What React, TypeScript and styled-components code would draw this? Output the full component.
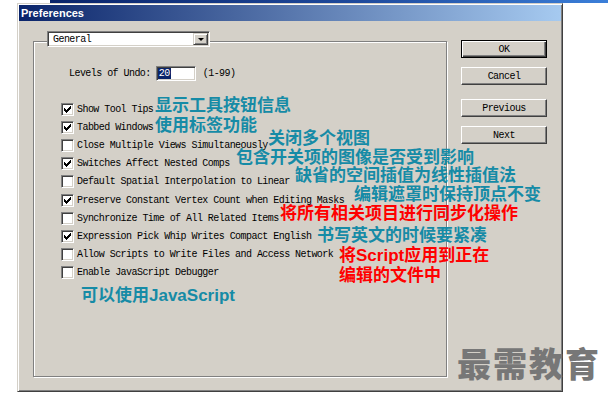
import React from "react";
import styled, { createGlobalStyle } from "styled-components";

const Global = createGlobalStyle`
  html, body { margin: 0; padding: 0; background: #fff; }
  body { overflow: hidden; }
`;

const Page = styled.div`
  position: relative;
  width: 608px;
  height: 405px;
  overflow: hidden;
  background: #fff;
  font-family: "Liberation Mono", monospace;
`;

const Strip = styled.div`
  height: 3px;
  margin-left: 50px;
  background: linear-gradient(90deg, #0a246a 0%, #1f4a9c 55%, #3b7fd9 100%);
`;

const Dialog = styled.div`
  box-sizing: border-box;
  margin-left: 17px;
  width: 546px;
  height: 389px;
  padding: 1px;
  background: #d4d0c8;
  border: 1px solid;
  border-color: #d4d0c8 #404040 #404040 #d4d0c8;
  box-shadow: inset 1px 1px 0 #fff, inset -1px -1px 0 #808080;
  display: flex;
  flex-direction: column;
`;

const TitleBar = styled.div`
  height: 16px;
  padding-left: 2px;
  display: flex;
  align-items: center;
  background: linear-gradient(90deg, #0a246a 0%, #a6caf0 100%);
  color: #fff;
  font: bold 11px "Liberation Sans", Arial, sans-serif;
`;

const Body = styled.div`
  flex: 1;
  display: flex;
  align-items: flex-start;
  padding: 19px 13px 0 14px;
`;

const Group = styled.div`
  box-sizing: border-box;
  width: 414px;
  height: 336px;
  margin-top: 1px;
  border: 1px solid #808080;
  box-shadow: inset 1px 1px 0 #fff, 1px 1px 0 #fff;
  display: flex;
  flex-direction: column;
  align-items: flex-start;
`;

const Select = styled.div`
  box-sizing: border-box;
  width: 163px;
  height: 16px;
  margin: -11px 0 0 13px;
  padding: 0 1px 0 5px;
  display: flex;
  align-items: center;
  background: #fff;
  border: 1px solid;
  border-color: #808080 #fff #fff #808080;
  box-shadow: inset 1px 1px 0 #404040, inset -1px -1px 0 #d4d0c8;
  font-size: 10px;
  letter-spacing: -0.55px;
  color: #000;
`;

const SelectText = styled.span`
  flex: 1;
`;

const DropButton = styled.span`
  box-sizing: border-box;
  width: 15px;
  height: 12px;
  display: flex;
  align-items: center;
  justify-content: center;
  background: #d4d0c8;
  border: 1px solid;
  border-color: #d4d0c8 #404040 #404040 #d4d0c8;
  box-shadow: inset 1px 1px 0 #fff, inset -1px -1px 0 #808080;
`;

const Arrow = styled.span`
  width: 0;
  height: 0;
  margin-top: 1px;
  border-left: 3px solid transparent;
  border-right: 3px solid transparent;
  border-top: 3px solid #000;
`;

const UndoRow = styled.div`
  margin: 19px 0 0 35px;
  height: 15px;
  display: flex;
  align-items: center;
  font-size: 10px;
  letter-spacing: -0.55px;
  color: #000;
`;

const UndoInput = styled.div`
  box-sizing: border-box;
  width: 40px;
  height: 15px;
  margin: 0 7px 0 5px;
  padding-left: 1px;
  display: flex;
  align-items: center;
  background: #fff;
  border: 1px solid;
  border-color: #808080 #fff #fff #808080;
  box-shadow: inset 1px 1px 0 #404040, inset -1px -1px 0 #d4d0c8;
`;

const Selected = styled.span`
  background: #0a246a;
  color: #fff;
  line-height: 11px;
  padding: 0 1px;
`;

const CheckList = styled.div`
  margin: 19px 0 0 27px;
  display: flex;
  flex-direction: column;
`;

const Row = styled.label`
  height: 18.2px;
  display: flex;
  align-items: center;
  gap: 3px;
  font-size: 10px;
  letter-spacing: -0.55px;
  color: #000;
  white-space: nowrap;
`;

const Box = styled.span`
  box-sizing: border-box;
  width: 13px;
  height: 13px;
  display: flex;
  align-items: center;
  justify-content: center;
  background: #fff;
  border: 1px solid;
  border-color: #808080 #fff #fff #808080;
  box-shadow: inset 1px 1px 0 #404040, inset -1px -1px 0 #d4d0c8;
`;

const ButtonColumn = styled.div`
  margin-left: 14px;
  width: 86px;
  display: flex;
  flex-direction: column;
  gap: 14px;
`;

const ButtonGroup = styled.div`
  display: flex;
  flex-direction: column;
  gap: 9px;
`;

const Button = styled.button<{ $default?: boolean }>`
  box-sizing: border-box;
  height: 18px;
  width: 86px;
  padding: 0;
  background: #d4d0c8;
  font-family: "Liberation Mono", monospace;
  font-size: 10px;
  letter-spacing: -0.55px;
  color: #000;
  border: 1px solid;
  border-color: ${(p) => (p.$default ? "#000" : "#fff #404040 #404040 #fff")};
  box-shadow: ${(p) =>
    p.$default
      ? "inset 1px 1px 0 #fff, inset -1px -1px 0 #404040, inset -2px -2px 0 #808080"
      : "inset -1px -1px 0 #808080"};
`;

const Note = styled.div<{ $x: number; $y: number; $tone: "teal" | "red" }>`
  position: absolute;
  left: ${(p) => p.$x}px;
  top: ${(p) => p.$y}px;
  font-family: "Liberation Sans", "Noto Sans CJK SC", sans-serif;
  font-weight: 700;
  font-size: 17px;
  line-height: 20px;
  white-space: nowrap;
  color: ${(p) => (p.$tone === "red" ? "#ff0000" : "#168ba6")};
`;

const Watermark = styled.div`
  position: absolute;
  left: 457px;
  top: 346px;
  font-family: "Noto Sans CJK SC", sans-serif;
  font-weight: 900;
  font-size: 34px;
  line-height: 34px;
  letter-spacing: 2px;
  color: #777;
`;

const Check = () => (
  <svg width="7" height="7" viewBox="0 0 7 7" shapeRendering="crispEdges">
    <path
      d="M6 0h1v1H6zM5 1h2v1H5zM0 2h1v1H0zM4 2h3v1H4zM0 3h2v1H0zM3 3h3v1H3zM0 4h5v1H0zM1 5h3v1H1zM2 6h1v1H2z"
      fill="#000"
    />
  </svg>
);

const options: [string, boolean][] = [
  ["Show Tool Tips", true],
  ["Tabbed Windows", true],
  ["Close Multiple Views Simultaneously", false],
  ["Switches Affect Nested Comps", true],
  ["Default Spatial Interpolation to Linear", false],
  ["Preserve Constant Vertex Count when Editing Masks", true],
  ["Synchronize Time of All Related Items", false],
  ["Expression Pick Whip Writes Compact English", true],
  ["Allow Scripts to Write Files and Access Network", false],
  ["Enable JavaScript Debugger", false],
];

const notes: { x: number; y: number; tone: "teal" | "red"; text: string[] }[] = [
  { x: 155, y: 96, tone: "teal", text: ["显示工具按钮信息"] },
  { x: 155, y: 116, tone: "teal", text: ["使用标签功能"] },
  { x: 268, y: 129, tone: "teal", text: ["关闭多个视图"] },
  { x: 236, y: 148, tone: "teal", text: ["包含开关项的图像是否受到影响"] },
  { x: 295, y: 166, tone: "teal", text: ["缺省的空间插值为线性插值法"] },
  { x: 354, y: 185, tone: "teal", text: ["编辑遮罩时保持顶点不变"] },
  { x: 280, y: 204, tone: "red", text: ["将所有相关项目进行同步化操作"] },
  { x: 317, y: 226, tone: "teal", text: ["书写英文的时候要紧凑"] },
  { x: 339, y: 246, tone: "red", text: ["将Script应用到正在", "编辑的文件中"] },
  { x: 81, y: 286, tone: "teal", text: ["可以使用JavaScript"] },
];

export default function App() {
  return (
    <Page>
      <Global />
      <Strip />
      <Dialog>
        <TitleBar>Preferences</TitleBar>
        <Body>
          <Group>
            <Select>
              <SelectText>General</SelectText>
              <DropButton>
                <Arrow />
              </DropButton>
            </Select>
            <UndoRow>
              Levels of Undo:
              <UndoInput>
                <Selected>20</Selected>
              </UndoInput>
              (1-99)
            </UndoRow>
            <CheckList>
              {options.map(([label, on]) => (
                <Row key={label}>
                  <Box>{on && <Check />}</Box>
                  {label}
                </Row>
              ))}
            </CheckList>
          </Group>
          <ButtonColumn>
            <ButtonGroup>
              <Button $default>OK</Button>
              <Button>Cancel</Button>
            </ButtonGroup>
            <ButtonGroup>
              <Button>Previous</Button>
              <Button>Next</Button>
            </ButtonGroup>
          </ButtonColumn>
        </Body>
      </Dialog>
      {notes.map((n) => (
        <Note key={n.text[0]} $x={n.x} $y={n.y} $tone={n.tone}>
          {n.text.map((t, i) => (
            <React.Fragment key={t}>
              {i > 0 && <br />}
              {t}
            </React.Fragment>
          ))}
        </Note>
      ))}
      <Watermark>最需教育</Watermark>
    </Page>
  );
}
